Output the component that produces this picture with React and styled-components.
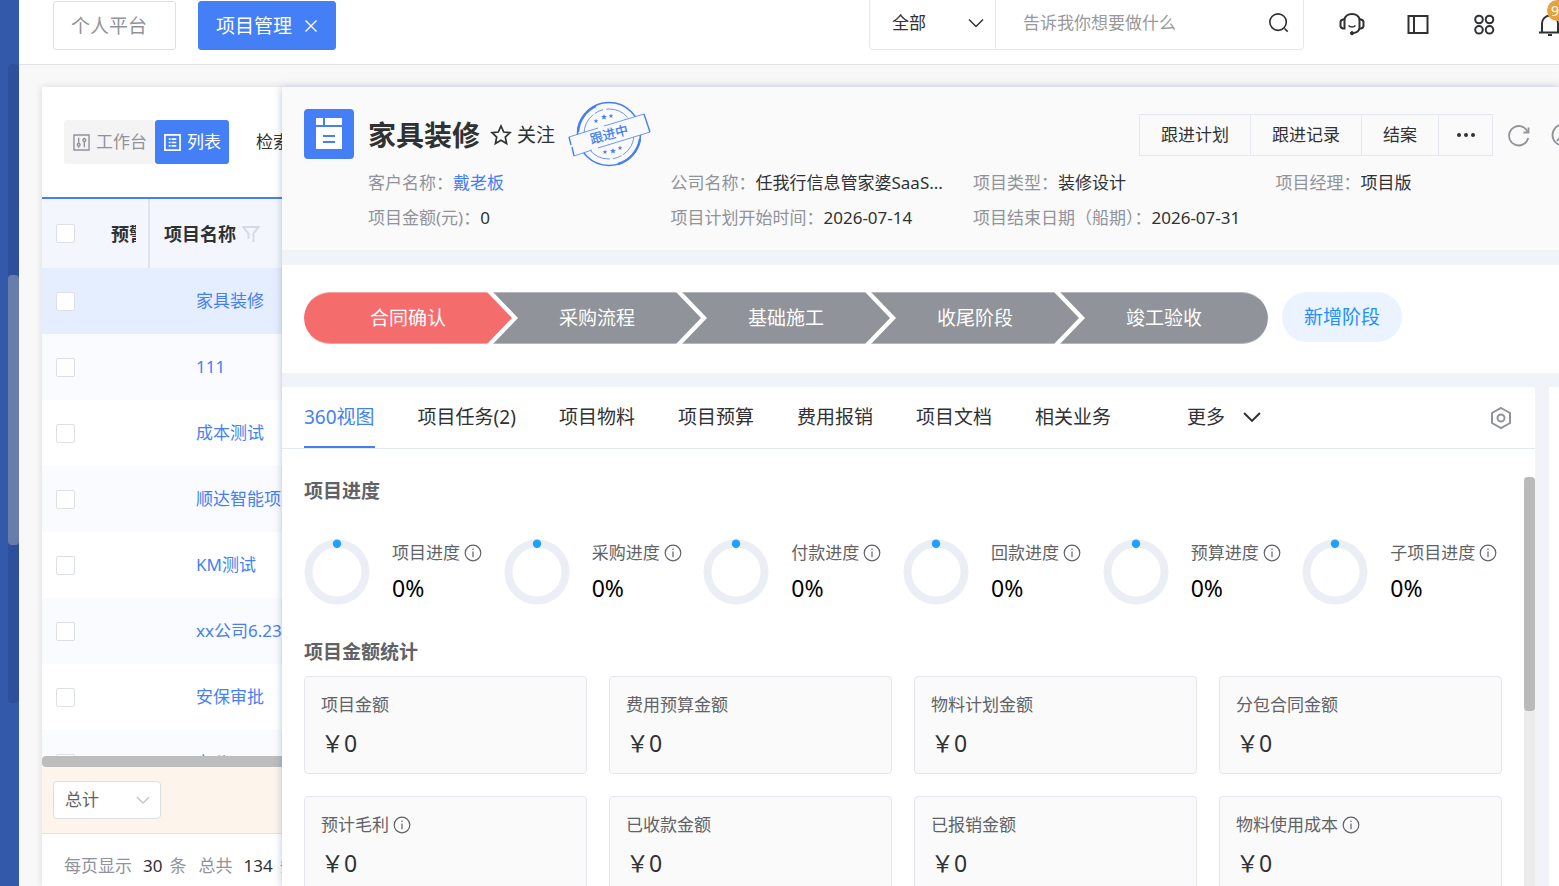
import { useState } from 'react';
import styled, { createGlobalStyle, css } from 'styled-components';

const GlobalStyle = createGlobalStyle`
  * {
    box-sizing: border-box;
  }
  body {
    margin: 0;
    overflow: hidden;
    font-family: 'Noto Sans', 'Noto Sans CJK SC', sans-serif;
    font-size: 17px;
    line-height: 24px;
    color: #303133;
  }
  button, input, select {
    font: inherit;
    color: inherit;
  }
  button {
    padding: 0;
    border: 0;
    background: none;
    cursor: pointer;
    white-space: nowrap;
  }
  a {
    color: #457ff5;
    text-decoration: none;
  }
  svg {
    display: block;
    flex: none;
  }
`;

const Page = styled.div`
  display: flex;
  height: 100vh;
  background: #f8f8f8;
`;

const Sidebar = styled.aside`
  flex: none;
  width: 19px;
  padding: 64px 0 0 8px;
  background: #3359ab;
`;

const SidebarTrack = styled.div`
  height: 639px;
  padding-top: 211px;
  border-radius: 4px;
  background: #2d509d;
`;

const SidebarThumb = styled.div`
  height: 270px;
  border-radius: 4px;
  background: #687dac;
`;

const Main = styled.main`
  flex: 1;
  min-width: 0;
  display: flex;
  flex-direction: column;
`;

const TopBar = styled.header`
  flex: none;
  display: flex;
  align-items: flex-start;
  gap: 22px;
  height: 65px;
  padding-left: 34px;
  border-bottom: 1px solid #e2e3e6;
  background: #fff;
`;

const PageTab = styled.button`
  display: flex;
  align-items: center;
  gap: 12px;
  height: 49px;
  margin-top: 1px;
  padding: 0 17px;
  border: 1px solid #dcdfe6;
  border-radius: 3px;
  font-size: 19px;
  color: #909399;
  ${(p) =>
    p.$active
      ? css`
          border-color: #457ff5;
          background: #457ff5;
          color: #fff;
        `
      : css`
          padding-right: 28px;
        `}
`;

const SearchBox = styled.div`
  flex: none;
  display: flex;
  align-items: center;
  width: 435px;
  height: 54px;
  margin: -4px 13px 0 auto;
  border: 1px solid #e4e7ed;
  border-radius: 4px;
`;

const SelectWrap = styled.label`
  display: flex;
  align-items: center;
  height: 100%;
  select {
    flex: 1;
    min-width: 0;
    border: 0;
    outline: 0;
    background: none;
    appearance: none;
  }
`;

const ScopeSelect = styled(SelectWrap)`
  width: 126px;
  padding: 0 11px 0 22px;
  border-right: 1px solid #e4e7ed;
`;

const SearchInput = styled.input`
  flex: 1;
  min-width: 0;
  padding: 0 27px;
  border: 0;
  outline: 0;
  background: none;
  &::placeholder {
    color: #999;
    opacity: 1;
  }
`;

const SearchButton = styled.button`
  margin-right: 13px;
`;

const TopIcons = styled.nav`
  flex: none;
  display: flex;
  gap: 40px;
  margin: 11px -4px 0 0;
`;

const IconButton = styled.button`
  position: relative;
  color: #303133;
`;

const Badge = styled.span`
  position: absolute;
  left: 10px;
  top: -11px;
  padding: 0 4px;
  border-radius: 11px;
  background: #e6a23c;
  color: #fff;
  font-size: 14px;
  line-height: 21px;
`;

const Workspace = styled.div`
  flex: 1;
  min-height: 0;
  display: flex;
  padding: 22px 0 0 23px;
`;

const ListPanel = styled.section`
  flex: none;
  width: 240px;
  display: flex;
  flex-direction: column;
  overflow: hidden;
  background: #fff;
  box-shadow: 0 0 8px rgba(0, 0, 0, 0.12);
`;

const ListToolbar = styled.div`
  flex: none;
  display: flex;
  align-items: center;
  height: 110px;
  padding-left: 22px;
  white-space: nowrap;
`;

const ViewSwitch = styled.button`
  flex: none;
  display: flex;
  align-items: center;
  gap: 6px;
  height: 44px;
  padding: 0 8px 0 9px;
  border-radius: 3px;
  background: ${(p) => (p.$active ? '#457ff5' : '#f4f4f5')};
  color: ${(p) => (p.$active ? '#fff' : '#909399')};
`;

const SearchLabel = styled.span`
  margin-left: 27px;
`;

const TableArea = styled.div`
  flex: 1;
  min-height: 0;
  overflow: hidden;
  border-top: 2px solid #457ff5;
`;

const ProjectTable = styled.table`
  width: 400px;
  table-layout: fixed;
  border-collapse: collapse;
  white-space: nowrap;
  th,
  td {
    padding: 0 0 0 14px;
    text-align: left;
  }
  th {
    height: 69px;
    background: #f3f7fd;
    font-size: 18px;
    font-weight: 700;
  }
  th:nth-child(2) {
    border-right: 2px solid #e0e4ec;
  }
  td {
    height: 66px;
  }
  td:last-child {
    padding-left: 47px;
  }
`;

const ProjectRow = styled.tr`
  background: #fff;
  &:nth-child(even) {
    background: #fafbfe;
  }
  ${(p) =>
    p.$selected &&
    css`
      background: #e5eeff;
    `}
`;

const Check = styled.input.attrs({ type: 'checkbox' })`
  display: block;
  width: 19px;
  height: 19px;
  margin: 0;
  border: 1px solid #dcdfe6;
  border-radius: 2px;
  background: #fff;
  appearance: none;
  &:checked {
    background: #457ff5;
  }
`;

const ClippedHead = styled.div`
  width: 25px;
  overflow: hidden;
`;

const FilterHead = styled.div`
  display: flex;
  align-items: center;
  gap: 6px;
`;

const HScroll = styled.div`
  flex: none;
  height: 11px;
  border-radius: 4px 0 0 4px;
  background: #bdbdbd;
`;

const TotalBar = styled.div`
  flex: none;
  display: flex;
  align-items: center;
  height: 67px;
  padding-left: 11px;
  border-bottom: 1px solid #e0e3ea;
  background: #fdf5eb;
`;

const TotalSelect = styled(SelectWrap)`
  width: 108px;
  height: 38px;
  padding: 0 10px 0 11px;
  border: 1px solid #dcdfe6;
  border-radius: 4px;
  background: #fff;
  color: #606266;
`;

const Pager = styled.div`
  flex: none;
  display: flex;
  height: 52px;
  padding: 20px 0 0 22px;
  color: #909399;
  white-space: nowrap;
  b {
    margin: 0 7px 0 11px;
    font-weight: 400;
    color: #303133;
  }
  span + span {
    margin-left: 12px;
  }
`;

const Drawer = styled.section`
  position: relative;
  flex: 1;
  min-width: 0;
  display: flex;
  flex-direction: column;
  background: #f0f3f8;
  box-shadow: 0 0 8px rgba(60, 70, 130, 0.32);
`;

const DrawerHead = styled.div`
  flex: none;
  display: flex;
  height: 164px;
  padding: 22px 0 0 22px;
  gap: 14px;
  overflow: hidden;
  border-bottom: 1px solid #f2f2f2;
  background: #fafafa;
`;

const ProjectBadge = styled.div`
  flex: none;
  display: grid;
  place-items: center;
  width: 50px;
  height: 50px;
  border-radius: 4px;
  background: #457ff5;
`;

const HeadBody = styled.div`
  flex: 1;
  min-width: 0;
`;

const TitleRow = styled.div`
  display: flex;
  align-items: center;
  height: 52px;
  margin-right: -16px;
`;

const Title = styled.h1`
  margin: 0 10px 0 0;
  font-size: 28px;
  line-height: 40px;
  font-weight: 700;
  white-space: nowrap;
`;

const FollowButton = styled.button`
  display: flex;
  align-items: center;
  gap: 5px;
  margin-right: 13px;
  font-size: 19px;
`;

const ActionGroup = styled.div`
  display: flex;
  margin: 0 14px 0 auto;
`;

const ActionButton = styled.button`
  height: 42px;
  padding: 0 ${(p) => (p.$compact ? 16 : 21)}px;
  border: 1px solid #e4e7ed;
  & + & {
    border-left: 0;
  }
`;

const RoundIcon = styled.button`
  margin-right: 20px;
  color: #909399;
  &:last-child {
    margin-right: 0;
  }
`;

const InfoGrid = styled.dl`
  display: grid;
  grid-template-columns: repeat(4, 1fr);
  row-gap: 11px;
  margin: 10px -19px 0 0;
`;

const InfoItem = styled.div`
  display: flex;
  min-width: 0;
  padding-right: 34px;
  white-space: nowrap;
  dt {
    flex: none;
    color: #909399;
  }
  dd {
    margin: 0;
    flex: none;
  }
`;

const StageSection = styled.div`
  flex: none;
  display: flex;
  align-items: flex-start;
  gap: 14px;
  height: 108px;
  margin: 14px 0;
  padding: 27px 0 0 22px;
  background: #fff;
`;

const StageList = styled.ol`
  display: flex;
  margin: 0;
  padding: 0;
  list-style: none;
`;

const Stage = styled.li`
  width: 208px;
  height: 52px;
  border: solid rgba(255, 255, 255, 0.35);
  border-width: 1px 0;
  background: ${(p) => (p.$current ? '#f56c6c' : '#909399')};
  color: #fff;
  font-size: 19px;
  line-height: 50px;
  text-align: center;
  clip-path: polygon(0 0, calc(100% - 25px) 0, 100% 50%, calc(100% - 25px) 100%, 0 100%, 25px 50%);
  & + & {
    margin-left: -19px;
  }
  &:first-child {
    border-radius: 26px 0 0 26px;
    clip-path: polygon(0 0, calc(100% - 25px) 0, 100% 50%, calc(100% - 25px) 100%, 0 100%);
  }
  &:last-child {
    border-radius: 0 26px 26px 0;
    clip-path: polygon(0 0, 100% 0, 100% 100%, 0 100%, 25px 50%);
  }
`;

const AddStage = styled.button`
  height: 50px;
  padding: 0 22px;
  border-radius: 25px;
  background: #eaf3ff;
  color: #1e8fff;
  font-size: 19px;
`;

const DetailRow = styled.div`
  flex: 1;
  min-height: 0;
  display: flex;
  gap: 14px;
`;

const Detail = styled.div`
  flex: 1;
  min-width: 0;
  display: flex;
  flex-direction: column;
  background: #fff;
`;

const SideStrip = styled.div`
  flex: none;
  width: 10px;
  background: #fff;
`;

const TabBar = styled.nav`
  flex: none;
  display: flex;
  align-items: center;
  gap: 43px;
  height: 62px;
  padding: 0 22px;
  border-bottom: 1px solid #e4e9f2;
`;

const DetailTab = styled.button`
  height: 61px;
  border-bottom: 2px solid ${(p) => (p.$active ? '#457ff5' : 'transparent')};
  color: ${(p) => (p.$active ? '#457ff5' : '#303133')};
  font-size: 19px;
`;

const MoreTab = styled(DetailTab)`
  display: flex;
  align-items: center;
  gap: 18px;
  margin-left: 33px;
`;

const SettingButton = styled.button`
  margin-left: auto;
  color: #909399;
`;

const ScrollBody = styled.div`
  flex: 1;
  min-height: 0;
  display: flex;
`;

const Content = styled.div`
  flex: 1;
  min-width: 0;
  padding: 28px 22px 0;
  overflow: hidden;
`;

const VTrack = styled.div`
  flex: none;
  width: 11px;
  margin-top: 28px;
  border-radius: 4px 4px 0 0;
  background: #ebebeb;
`;

const VThumb = styled.div`
  height: 234px;
  border-radius: 4px;
  background: #bababa;
`;

const SectionTitle = styled.h2`
  margin: 0;
  font-size: 19px;
  line-height: 28px;
  font-weight: 700;
  color: #606266;
`;

const ProgressGrid = styled.div`
  display: grid;
  grid-template-columns: repeat(6, 1fr);
  margin: 34px 0 33px;
`;

const ProgressItem = styled.div`
  display: flex;
  align-items: center;
  gap: 22px;
  height: 66px;
  white-space: nowrap;
`;

const Label = styled.div`
  display: flex;
  align-items: center;
  gap: 4px;
  color: #606266;
`;

const Percent = styled.div`
  margin-top: 8px;
  font-size: 23px;
  line-height: 30px;
  color: #000;
`;

const CardGrid = styled.div`
  display: grid;
  grid-template-columns: repeat(4, 1fr);
  gap: 22px;
  margin-top: 10px;
`;

const Card = styled.div`
  height: 98px;
  padding: 16px;
  border: 1px solid #e4e7ed;
  border-radius: 4px;
  background: #fafafa;
`;

const Amount = styled.div`
  margin-top: 11px;
  font-size: 23px;
  line-height: 30px;
`;

function Icon({ size = 18, box = 24, width = 2, children }) {
  return (
    <svg
      width={size}
      height={size}
      viewBox={`0 0 ${box} ${box}`}
      fill='none'
      stroke='currentColor'
      strokeWidth={width}
      aria-hidden='true'
    >
      {children}
    </svg>
  );
}

const ChevronDown = ({ size = 16, color, width = 1.5 }) => (
  <Icon size={size} box={16} width={width}>
    <path d='M1 4.5l7 7 7-7' stroke={color || 'currentColor'} />
  </Icon>
);

const InfoIcon = () => (
  <Icon size={18} box={18} width={1.2}>
    <circle cx='9' cy='9' r='7.8' />
    <path d='M9 7.6v5.6M9 4.6v1.5' />
  </Icon>
);

const Ring = () => (
  <svg width='66' height='66' viewBox='0 0 66 66' aria-hidden='true'>
    <circle cx='33' cy='33' r='28.5' fill='none' stroke='#ebeef5' strokeWidth='8' />
    <circle cx='33' cy='4.7' r='4.2' fill='#20a0ff' />
  </svg>
);

const star = 'M0-3l.8 2 2.1.1-1.6 1.3.5 2.1L0 1.4l-1.8 1.1.5-2.1-1.6-1.3 2.1-.1z';

const Stamp = () => (
  <svg width='84' height='68' viewBox='0 0 84 68' role='img' aria-label='跟进中'>
    <g fill='none' stroke='#457ff5'>
      <circle cx='41' cy='33' r='31.5' strokeWidth='1.6' />
      <path d='M10 31A31 31 0 0 1 28 5M50 63A31 31 0 0 0 72 38' strokeWidth='2.4' />
      <circle cx='41' cy='33' r='25' strokeWidth='.8' strokeDasharray='24 2 9 3' />
      <path d='M1 36L76 13l6 18L6 55z' fill='#fafafa' stroke='none' />
      <path d='M1 36L30 27M36 25L76 13M82 31L30 47M24 49L6 55' strokeWidth='.8' />
      <path d='M76 13l6 18M1 36l2 8M4 46l2 9' strokeWidth='1.4' />
    </g>
    <g fill='#457ff5'>
      <path d={star} transform='translate(36 16)' />
      <path d={star} transform='translate(28 20) scale(.8)' />
      <path d={star} transform='translate(43 15) scale(.8)' />
      <path d={star} transform='translate(45 50)' />
      <path d={star} transform='translate(37 51) scale(.8)' />
      <path d={star} transform='translate(52 47) scale(.8)' />
      <text x='41' y='38' fontSize='13' fontWeight='500' textAnchor='middle' transform='rotate(-15 41 33)'>
        跟进中
      </text>
    </g>
  </svg>
);

const projects = ['家具装修', '111', '成本测试', '顺达智能项目', 'KM测试', 'xx公司6.23项目', '安保审批', '办公'];

const info = [
  ['客户名称：', '戴老板', true],
  ['公司名称：', '任我行信息管家婆SaaS...'],
  ['项目类型：', '装修设计'],
  ['项目经理：', '项目版'],
  ['项目金额(元)：', '0'],
  ['项目计划开始时间：', '2026-07-14'],
  ['项目结束日期（船期）：', '2026-07-31'],
];

const stages = ['合同确认', '采购流程', '基础施工', '收尾阶段', '竣工验收'];

const tabs = ['360视图', '项目任务(2)', '项目物料', '项目预算', '费用报销', '项目文档', '相关业务'];

const progress = ['项目进度', '采购进度', '付款进度', '回款进度', '预算进度', '子项目进度'];

const cards = [
  { label: '项目金额' },
  { label: '费用预算金额' },
  { label: '物料计划金额' },
  { label: '分包合同金额' },
  { label: '预计毛利', tip: true },
  { label: '已收款金额' },
  { label: '已报销金额' },
  { label: '物料使用成本', tip: true },
];

function Header() {
  return (
    <TopBar>
      <PageTab>个人平台</PageTab>
      <PageTab $active>
        项目管理
        <Icon size={14} box={14} width={1.4}>
          <path d='M1.5 1.5l11 11M12.5 1.5l-11 11' />
        </Icon>
      </PageTab>
      <SearchBox>
        <ScopeSelect>
          <select aria-label='搜索范围'>
            <option>全部</option>
          </select>
          <ChevronDown />
        </ScopeSelect>
        <SearchInput aria-label='搜索' placeholder='告诉我你想要做什么' />
        <SearchButton aria-label='搜索'>
          <Icon size={22} width={1.8}>
            <circle cx='11' cy='11' r='9' />
            <path d='M18 18l3.5 3.5' />
          </Icon>
        </SearchButton>
      </SearchBox>
      <TopIcons>
        <IconButton aria-label='客服'>
          <Icon size={26} box={26} width={2}>
            <path d='M5 9a8.3 8.3 0 0 1 16 0' />
            <path d='M5.5 8.5v9H4a3 3 0 0 1-2.5-3v-3a3 3 0 0 1 2.5-3zM20.5 8.5v9H22a3 3 0 0 0 2.5-3v-3a3 3 0 0 0-2.5-3z' />
            <path d='M20.5 17.5c-.8 2.6-3 4.2-6.5 4.6' />
            <path d='M9.5 14.5c1.8 2 5.2 2 7 0' strokeWidth='1.4' />
            <circle cx='13' cy='22.2' r='1.6' fill='currentColor' strokeWidth='1' />
          </Icon>
        </IconButton>
        <IconButton aria-label='侧栏'>
          <Icon size={26} box={26} width={2}>
            <path d='M3.5 5h19v17h-19zM9 5v17' />
          </Icon>
        </IconButton>
        <IconButton aria-label='应用'>
          <Icon size={26} box={26} width={2}>
            <circle cx='8' cy='8.5' r='3.8' />
            <circle cx='18.5' cy='8.5' r='3.8' />
            <circle cx='8' cy='18.8' r='3.8' />
            <circle cx='18.5' cy='18.8' r='3.8' />
          </Icon>
        </IconButton>
        <IconButton aria-label='消息'>
          <Icon size={26} box={26} width={2}>
            <path d='M5 20.5v-8a8 8 0 0 1 16 0v8M2 21.5h22' />
            <path d='M11 24h4' />
          </Icon>
          <Badge>99</Badge>
        </IconButton>
      </TopIcons>
    </TopBar>
  );
}

function ProjectList() {
  return (
    <ListPanel>
      <ListToolbar>
        <ViewSwitch>
          <Icon size={17} box={18} width={1.5}>
            <path d='M1 1h16v16H1zM6 4v6M6 13v1.5M12 4v1M12 8v6' />
            <circle cx='6' cy='11.5' r='1.5' />
            <circle cx='12' cy='6.5' r='1.5' />
          </Icon>
          工作台
        </ViewSwitch>
        <ViewSwitch $active>
          <Icon size={17} box={18} width={1.8}>
            <path d='M1 1h16v16H1z' />
            <path d='M5 5.5h2M8 5.5h5M5 9h2M8 9h5M5 12.5h2M8 12.5h5' />
          </Icon>
          列表
        </ViewSwitch>
        <SearchLabel>检索</SearchLabel>
      </ListToolbar>
      <TableArea>
        <ProjectTable>
          <colgroup>
            <col width='55' />
            <col width='52' />
            <col />
          </colgroup>
          <thead>
            <tr>
              <th>
                <Check aria-label='全选' />
              </th>
              <th>
                <ClippedHead>预警</ClippedHead>
              </th>
              <th>
                <FilterHead>
                  项目名称
                  <Icon size={18} box={18} width={2}>
                    <path d='M11.5 17V8.5L16.5 2H1l5.500 6.500V14' stroke='#d5d9e2' />
                  </Icon>
                </FilterHead>
              </th>
            </tr>
          </thead>
          <tbody>
            {projects.map((name, i) => (
              <ProjectRow key={name} $selected={i === 0}>
                <td>
                  <Check aria-label={name} />
                </td>
                <td />
                <td>
                  <a href='#project'>{name}</a>
                </td>
              </ProjectRow>
            ))}
          </tbody>
        </ProjectTable>
      </TableArea>
      <HScroll />
      <TotalBar>
        <TotalSelect>
          <select aria-label='合计方式'>
            <option>总计</option>
          </select>
          <ChevronDown size={14} color='#c0c4cc' />
        </TotalSelect>
      </TotalBar>
      <Pager>
        <span>
          每页显示<b>30</b>条
        </span>
        <span>
          总共<b>134</b>条
        </span>
      </Pager>
    </ListPanel>
  );
}

function ProjectHead() {
  return (
    <DrawerHead>
      <ProjectBadge>
        <svg width='26' height='32' viewBox='0 0 26 32' aria-hidden='true'>
          <path fill='#fff' d='M0 0h7v7H0zM9 0h17v7H9zM0 9h26v22H0z' />
          <path stroke='#457ff5' strokeWidth='2' d='M7 18h12M7 24h12' />
        </svg>
      </ProjectBadge>
      <HeadBody>
        <TitleRow>
          <Title>家具装修</Title>
          <FollowButton>
            <Icon size={22} box={22} width={1.7}>
              <path d='M11 2l2.7 6 6.3.7-4.7 4.4 1.3 6.4L11 16.3 5.4 19.5l1.3-6.4L2 8.7 8.3 8z' />
            </Icon>
            关注
          </FollowButton>
          <Stamp />
          <ActionGroup>
            <ActionButton>跟进计划</ActionButton>
            <ActionButton>跟进记录</ActionButton>
            <ActionButton>结案</ActionButton>
            <ActionButton $compact aria-label='更多操作'>
              <svg width='21' height='20' viewBox='0 0 21 20' fill='#303133'>
                <circle cx='4' cy='10' r='2' />
                <circle cx='11' cy='10' r='2' />
                <circle cx='18' cy='10' r='2' />
              </svg>
            </ActionButton>
          </ActionGroup>
          <RoundIcon aria-label='刷新'>
            <Icon size={24} width={1.8}>
              <path d='M21.2 15A9.7 9.7 0 1 1 20.5 8.500' />
              <path d='M21.5 4.500v5h-5' />
            </Icon>
          </RoundIcon>
          <RoundIcon aria-label='帮助'>
            <Icon size={24} width={1.8}>
              <circle cx='12' cy='12' r='10.500' />
              <path d='M6 18l5-6 3 3 4-5' />
            </Icon>
          </RoundIcon>
        </TitleRow>
        <InfoGrid>
          {info.map(([label, value, link]) => (
            <InfoItem key={label}>
              <dt>{label}</dt>
              <dd>{link ? <a href='#customer'>{value}</a> : value}</dd>
            </InfoItem>
          ))}
        </InfoGrid>
      </HeadBody>
    </DrawerHead>
  );
}

function Overview() {
  return (
    <ScrollBody>
      <Content>
        <SectionTitle>项目进度</SectionTitle>
        <ProgressGrid>
          {progress.map((label) => (
            <ProgressItem key={label}>
              <Ring />
              <div>
                <Label>
                  {label}
                  <InfoIcon />
                </Label>
                <Percent>0%</Percent>
              </div>
            </ProgressItem>
          ))}
        </ProgressGrid>
        <SectionTitle>项目金额统计</SectionTitle>
        <CardGrid>
          {cards.map(({ label, tip }) => (
            <Card key={label}>
              <Label>
                {label}
                {tip && <InfoIcon />}
              </Label>
              <Amount>￥0</Amount>
            </Card>
          ))}
        </CardGrid>
      </Content>
      <VTrack>
        <VThumb />
      </VTrack>
    </ScrollBody>
  );
}

export default function App() {
  const [activeTab, setActiveTab] = useState(tabs[0]);
  return (
    <Page lang='zh-CN'>
      <GlobalStyle />
      <Sidebar>
        <SidebarTrack>
          <SidebarThumb />
        </SidebarTrack>
      </Sidebar>
      <Main>
        <Header />
        <Workspace>
          <ProjectList />
          <Drawer>
            <ProjectHead />
            <StageSection>
              <StageList>
                {stages.map((name, i) => (
                  <Stage key={name} $current={i === 0}>
                    {name}
                  </Stage>
                ))}
              </StageList>
              <AddStage>新增阶段</AddStage>
            </StageSection>
            <DetailRow>
              <Detail>
                <TabBar>
                  {tabs.map((name) => (
                    <DetailTab key={name} $active={name === activeTab} onClick={() => setActiveTab(name)}>
                      {name}
                    </DetailTab>
                  ))}
                  <MoreTab>
                    更多
                    <ChevronDown size={18} width={1.8} />
                  </MoreTab>
                  <SettingButton aria-label='设置'>
                    <Icon size={24} width={2}>
                      <path d='M12 2l9 5v10l-9 5-9-5V7z' />
                      <circle cx='12' cy='12' r='3.5' />
                    </Icon>
                  </SettingButton>
                </TabBar>
                <Overview />
              </Detail>
              <SideStrip />
            </DetailRow>
          </Drawer>
        </Workspace>
      </Main>
    </Page>
  );
}
